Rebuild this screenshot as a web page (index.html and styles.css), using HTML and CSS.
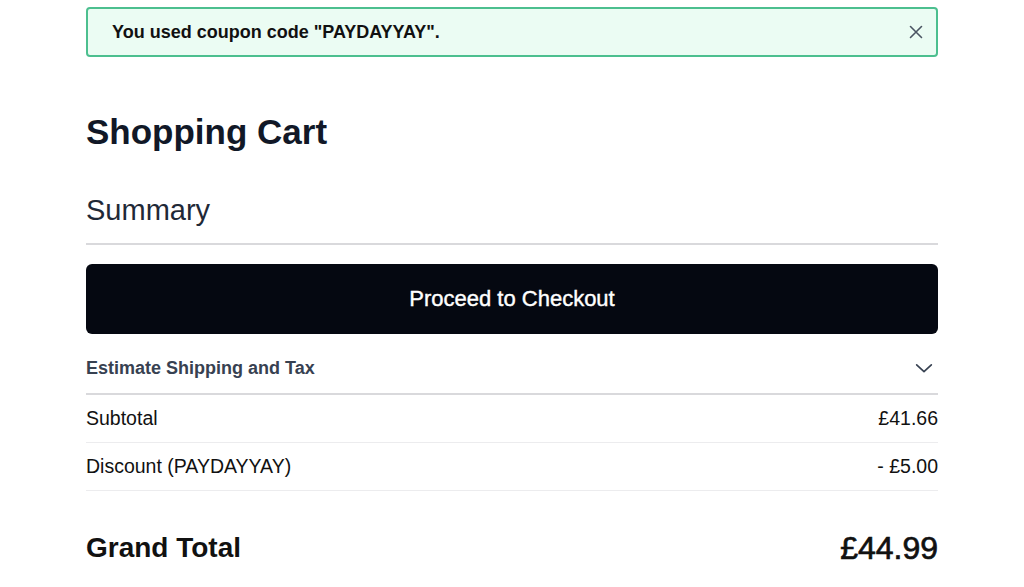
FILE: index.html
```html
<!DOCTYPE html>
<html lang="en">
<head>
    <meta charset="UTF-8">
    <meta name="viewport" content="width=device-width, initial-scale=1.0">
    <title>Shopping Cart</title>
    <link rel="stylesheet" href="styles.css">
</head>
<body>
    <div class="page">
        <div class="alert">
            <span class="alert-text">You used coupon code "PAYDAYYAY".</span>
            <button class="alert-close" aria-label="Close">
                <svg width="16" height="16" viewBox="0 0 16 16" fill="none" stroke="#4b5563" stroke-width="1.6" stroke-linecap="round">
                    <path d="M2.5 2.5 L13.5 13.5 M13.5 2.5 L2.5 13.5"/>
                </svg>
            </button>
        </div>

        <h1 class="page-title">Shopping Cart</h1>

        <div class="summary">
            <h2 class="summary-title">Summary</h2>
            <button class="checkout-btn">Proceed to Checkout</button>

            <div class="estimate">
                <span>Estimate Shipping and Tax</span>
                <svg width="22" height="22" viewBox="0 0 24 24" fill="none" stroke="#374151" stroke-width="1.8" stroke-linecap="round" stroke-linejoin="round">
                    <path d="M4 8.5 L12 16 L20 8.5"/>
                </svg>
            </div>

            <div class="totals">
                <div class="row">
                    <span>Subtotal</span>
                    <span>£41.66</span>
                </div>
                <div class="row">
                    <span>Discount (PAYDAYYAY)</span>
                    <span>- £5.00</span>
                </div>
                <div class="row grand">
                    <span>Grand Total</span>
                    <span class="grand-price">£44.99</span>
                </div>
            </div>
        </div>
    </div>
</body>
</html>
```

FILE: styles.css
```css
/* General Styles */
body {
    margin: 0;
    background-color: #fff;
    font-family: 'Liberation Sans', Arial, sans-serif;
    color: #111;
}

.page {
    width: 852px;
    margin: 0 auto;
    padding-top: 7px;
}

/* Alert */
.alert {
    display: flex;
    align-items: center;
    justify-content: space-between;
    height: 50px;
    box-sizing: border-box;
    padding: 0 12px 0 24px;
    background-color: #ebfcf3;
    border: 2px solid #4cbf8f;
    border-radius: 4px;
}

.alert-text {
    font-size: 18px;
    font-weight: 700;
    color: #111;
}

.alert-close {
    display: flex;
    background: none;
    border: none;
    padding: 0;
    cursor: pointer;
}

/* Headings */
.page-title {
    margin: 55px 0 0;
    font-size: 35px;
    line-height: 40px;
    font-weight: 700;
    color: #111827;
}

.summary-title {
    margin: 41px 0 0;
    padding-bottom: 16px;
    font-size: 29px;
    line-height: 34px;
    font-weight: 400;
    color: #1f2937;
    border-bottom: 2px solid #d9d9dc;
}

/* Checkout button */
.checkout-btn {
    display: block;
    width: 100%;
    height: 70px;
    margin-top: 19px;
    background-color: #050811;
    color: #fff;
    border: none;
    border-radius: 6px;
    font-family: inherit;
    font-size: 22px;
    font-weight: 400;
    -webkit-text-stroke: 0.4px currentColor;
    cursor: pointer;
}

.estimate {
    display: flex;
    align-items: center;
    justify-content: space-between;
    height: 50px;
    padding: 9px 3px 0 0;
    border-bottom: 2px solid #d9d9dc;
    font-size: 18px;
    font-weight: 700;
    color: #374151;
}

/* Totals */
.row {
    display: flex;
    justify-content: space-between;
    align-items: center;
    height: 47px;
    border-bottom: 1px solid #ececee;
    font-size: 19.5px;
    color: #111;
}

.row.grand {
    height: auto;
    padding-top: 40px;
    line-height: 34px;
    border-bottom: none;
    font-size: 28px;
    font-weight: 700;
}

.grand-price {
    font-size: 32px;
    font-weight: 400;
    -webkit-text-stroke: 0.7px currentColor;
}
```
